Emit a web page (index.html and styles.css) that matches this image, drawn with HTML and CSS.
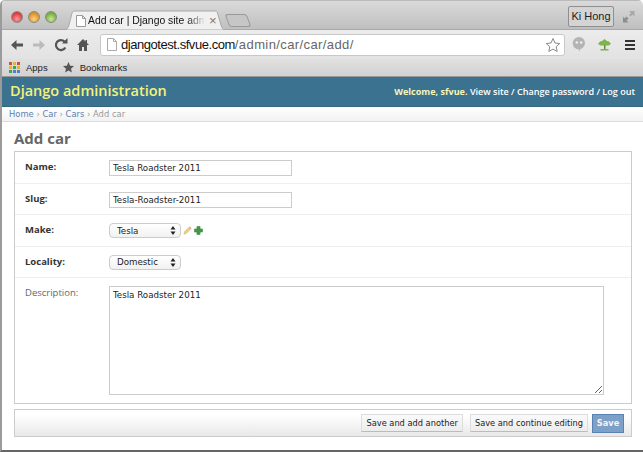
FILE: index.html
```html
<!DOCTYPE html>
<html lang="en">
<head>
<meta charset="utf-8">
<title>Add car | Django site admin</title>
<link rel="stylesheet" href="styles.css">
</head>
<body>
<div class="window">
  <div class="tabbar">
    <div class="lights"><i class="light red"></i><i class="light amber"></i><i class="light green"></i></div>
    <div class="tab">
      <svg class="tab-shape" width="161" height="20" viewBox="0 0 161 20"><path d="M0 20C3 20 4 18 5 15L8 3C8.500 1.500 9.500 1 11 1H151C152.500 1 153 1.500 153.500 3L157 15C158 18 159 20 161 20z" fill="#f0f0f0" stroke="#a8a8a8"/></svg>
      <svg class="page-icon" width="10" height="12" viewBox="0 0 10 12"><path d="M.5.500h6l3 3v8h-9z M6.500.5v3h3" fill="#fff" stroke="#9a9a9a"/></svg>
      <span class="tab-title">Add car | Django site adm</span>
      <span class="tab-close">×</span>
    </div>
    <div class="newtab"></div>
    <div class="spacer"></div>
    <div class="profile">Ki Hong</div>
    <svg class="fullscreen" width="13" height="13" viewBox="0 0 13 13"><path d="M7 1h5.500v5.500l-2-2-2 2-1.500-1.500 2-2z" fill="#a8a8a8"/><path d="M1 6.500v6h5.500l-2-2 2-2-2-2-2 2z" fill="#8d8d8d"/></svg>
  </div>
  <div class="toolbar">
    <svg class="nav" width="14" height="14" viewBox="0 0 14 14"><path d="M13 5.500H6.500V2L1 7l5.500 5V8.500H13z" fill="#555"/></svg>
    <svg class="nav" width="14" height="14" viewBox="0 0 14 14"><path d="M1 5.500h6.500V2L13 7l-5.500 5V8.500H1z" fill="#bbb"/></svg>
    <svg class="nav" width="14" height="14" viewBox="0 0 14 14"><path d="M11.300 9.500A5 5 0 1 1 10.500 3.500" fill="none" stroke="#555" stroke-width="2.200"/><path d="M8 5.500h5.500V0z" fill="#555"/></svg>
    <svg class="nav" width="14" height="14" viewBox="0 0 14 14"><path d="M7 1L1 7h2v6h3V9h2v4h3V7h2l-2-2V2H9.500v1.500z" fill="#555"/></svg>
    <div class="omnibox">
      <svg class="page-icon" width="10" height="13" viewBox="0 0 10 13"><path d="M.5.500h6l3 3v9h-9z M6.500.5v3h3" fill="#fff" stroke="#aaa"/></svg>
      <span class="url"><span class="host">djangotest.sfvue.com</span>/admin/car/car/add/</span>
      <svg class="star" width="16" height="16" viewBox="0 0 16 16"><path d="M8 1.500l2 4.500 4.800.5-3.600 3.200 1 4.800L8 12.100l-4.200 2.400 1-4.800L1.200 6.500 6 6z" fill="#fff" stroke="#8a8a8a"/></svg>
    </div>
    <svg class="ext bubble" width="14" height="17" viewBox="0 0 14 17"><path d="M7 1a6 6 0 0 1 6 6c0 3-2 5-5 6.500V16l-1-2.500A6 6 0 0 1 7 1z" fill="#b4b4b4"/><circle cx="4.800" cy="6.500" r="1.300" fill="#eee"/><circle cx="9.200" cy="6.500" r="1.300" fill="#eee"/></svg>
    <svg class="ext tree" width="15" height="14" viewBox="0 0 15 14"><path d="M7.500 1L10 3l2 .5 2 2.500-2.500 1.500h-8L1 6l2-2.500L5 3z" fill="#7cb64a"/><path d="M7 7h1.500v4H7z" fill="#6a8a3a"/><path d="M3.500 11h8v1.500h-8z" fill="#7cb64a"/></svg>
    <div class="menu"><i></i><i></i><i></i></div>
  </div>
  <div class="bookmarks">
    <span class="apps"><i class="r"></i><i class="y"></i><i class="r"></i><i class="y"></i><i class="g"></i><i class="y"></i><i class="g"></i><i class="b"></i><i class="b"></i></span>
    <span class="bm-label">Apps</span>
    <svg class="bm-star" width="11" height="11" viewBox="0 0 11 11"><path d="M5.500 0l1.600 3.700 3.900.4-3 2.600.9 3.900-3.400-2-3.400 2 .9-3.900-3-2.600 3.900-.4z" fill="#555"/></svg>
    <span class="bm-label">Bookmarks</span>
  </div>

  <header class="site-header">
    <h1 class="branding">Django administration</h1>
    <div class="usertools"><strong class="welcome">Welcome, sfvue.</strong> View site / Change password / Log out</div>
  </header>
  <nav class="breadcrumbs"><a>Home</a> › <a>Car</a> › <a>Cars</a> › Add car</nav>

  <main class="content">
    <h2 class="title">Add car</h2>
    <form class="form">
      <fieldset class="module">
        <div class="row">
          <label class="label required">Name:</label>
          <input class="text" type="text" value="Tesla Roadster 2011">
        </div>
        <div class="row">
          <label class="label required">Slug:</label>
          <input class="text" type="text" value="Tesla-Roadster-2011">
        </div>
        <div class="row sel-row">
          <label class="label required">Make:</label>
          <span class="select"><select><option>Tesla</option></select><svg class="updown" width="6" height="9" viewBox="0 0 6 9"><path d="M3 0l2.500 3.500h-5zM3 9L.5 5.500h5z" fill="#222"/></svg></span>
          <svg class="pencil" width="9" height="9" viewBox="0 0 10 10"><path d="M1 9l.7-2.600 5-5 1.900 1.900-5 5z" fill="#f0d27a" stroke="#c9a24c" stroke-width=".5"/><path d="M6.700 1.400l.9-.9 1.900 1.900-.9.900z" fill="#e58fb0"/></svg>
          <svg class="plus" width="9" height="9" viewBox="0 0 10 10"><path d="M3.200.5h3.600v2.700h2.700v3.600H6.800v2.700H3.200V6.800H.5V3.200h2.700z" fill="#3f9c45" stroke="#2d7a34" stroke-width=".5"/></svg>
        </div>
        <div class="row sel-row">
          <label class="label required">Locality:</label>
          <span class="select"><select><option>Domestic</option></select><svg class="updown" width="6" height="9" viewBox="0 0 6 9"><path d="M3 0l2.500 3.500h-5zM3 9L.5 5.500h5z" fill="#222"/></svg></span>
        </div>
        <div class="row last">
          <label class="label">Description:</label>
          <textarea class="area">Tesla Roadster 2011</textarea>
        </div>
      </fieldset>
      <div class="submit-row">
        <button type="button" class="btn">Save and add another</button>
        <button type="button" class="btn">Save and continue editing</button>
        <button type="button" class="btn default">Save</button>
      </div>
    </form>
  </main>
</div>
</body>
</html>
```
FILE: styles.css
```css
* { box-sizing: border-box; }
html, body { margin: 0; height: 100%; }
body { background: #fff; overflow: hidden; font-family: "DejaVu Sans", sans-serif; }
.window { width: 643px; height: 452px; border-left: 2px solid #9b9b9b; border-bottom: 2px solid #666; border-radius: 5px 5px 0 0; background: #fff; display: flex; flex-direction: column; overflow: hidden; }

.tabbar { height: 30px; flex: none; display: flex; align-items: flex-end; background: linear-gradient(#dadada, #bfbfbf); border-top: 1px solid #bbb; border-bottom: 1px solid #a9a9a9; }
.lights { display: flex; gap: 7px; padding: 0 0 6px 10px; width: 62px; flex: none; }
.light { width: 10px; height: 10px; border-radius: 50%; border: 1px solid #8a8a8a; box-sizing: content-box; margin: 0 -1px; }
.red { background: radial-gradient(circle at 50% 70%, #f79a9a, #d9383c 70%); }
.amber { background: radial-gradient(circle at 50% 70%, #fcd27f, #d98f20 70%); }
.green { background: radial-gradient(circle at 50% 70%, #c8e88f, #74ac3e 70%); }
.tab { position: relative; width: 161px; height: 20px; flex: none; display: flex; align-items: center; padding: 1px 0 0 12px; gap: 2px; font: 11px "Liberation Sans", sans-serif; color: #111; margin-bottom: -1px; }
.tab-shape { position: absolute; left: 0; top: 0; }
.tab .page-icon { position: relative; flex: none; }
.tab-title { position: relative; white-space: nowrap; width: 117px; flex: none; font-size: 10.400px; -webkit-mask-image: linear-gradient(90deg, #000 85%, transparent); mask-image: linear-gradient(90deg, #000 85%, transparent); }
.tab-close { position: relative; color: #777; font-size: 13px; margin-left: 2px; }
.newtab { width: 22px; height: 13px; margin: 0 0 2px 2px; border: 1px solid #999; border-radius: 3px; background: #c6c6c6; transform: skewX(20deg); }
.spacer { flex: 1; }
.profile { height: 21px; width: 46px; margin-bottom: 2px; border: 1px solid #8f8f8f; border-radius: 2px; font: 11px/19px "Liberation Sans", sans-serif; text-align: center; color: #222; background: #d4d4d4; }
.fullscreen { margin: 0 8px 6px 8px; }

.toolbar { height: 29px; flex: none; display: flex; align-items: center; background: linear-gradient(#ececec, #e2e2e2); padding-left: 8px; gap: 8px; }
.nav { flex: none; }
.omnibox { width: 465px; height: 22px; flex: none; margin-left: 2px; background: #fff; border: 1px solid #c8c8c8; border-radius: 3px; display: flex; align-items: center; padding: 0 3px 0 6px; gap: 4px; }
.url { flex: 1; font: 13px "Liberation Sans", sans-serif; letter-spacing: .4px; color: #666; white-space: nowrap; }
.host { color: #111; letter-spacing: -.45px; }
.ext { flex: none; }
.bubble { margin-left: -1px; }
.tree { margin-left: 3px; }
.menu { margin-left: 5px; display: flex; flex-direction: column; gap: 2px; width: 10px; flex: none; }
.menu i { height: 2px; background: #333; display: block; }

.bookmarks { height: 18px; flex: none; display: flex; align-items: center; padding-left: 7px; background: linear-gradient(#e0e0e0, #d2d2d2); font: 9.500px "Liberation Sans", sans-serif; color: #222; border-bottom: 1px solid #999; }
.apps { display: grid; grid-template-columns: repeat(3, 3px); grid-auto-rows: 3px; gap: 1px; width: 11px; margin-right: 6px; }
.apps i { display: block; }
.apps .r { background: #e0483e; } .apps .y { background: #e8b420; } .apps .g { background: #3aa757; } .apps .b { background: #4a80d8; }
.bm-star { margin: 0 6px 0 15px; }

.site-header { height: 30px; flex: none; background: #3b7290; display: flex; align-items: center; justify-content: space-between; padding: 0 8px 2px 8px; border-bottom: 1px solid #34677f; }
.branding { margin: 0; font: 600 14.500px "Open Sans", sans-serif; color: #f4f379; }
.usertools { font: 600 9.050px "Open Sans", sans-serif; color: #fff; padding-top: 2px; }
.welcome { color: #f5f5b8; font-weight: 700; }

.breadcrumbs { height: 15px; flex: none; padding-left: 7px; font: 8.400px/15px "DejaVu Sans", sans-serif; color: #999; background: linear-gradient(#fff, #f2f2f2); border-bottom: 1px solid #ddd; }
.breadcrumbs a { color: #5b80b2; }

.content { flex: 1; padding: 0 11px 0 12px; }
.title { margin: 0; height: 29px; padding-top: 8px; font: 700 15px/17px "Open Sans", sans-serif; color: #666; }
.module { margin: 0; padding: 0; border: 1px solid #ccc; min-width: 0; height: 253px; }
.row { display: flex; align-items: flex-start; height: 31.500px; padding: 8px 0 0 10px; border-bottom: 1px solid #eee; }
.row.last { height: auto; border-bottom: 0; }
.label { width: 84px; flex: none; font: 700 9.500px/13px "Open Sans", sans-serif; color: #333; }
.label:not(.required) { font-weight: 400; color: #666; }
.text { width: 183px; height: 16px; padding: 0 3px; border: 1px solid #ccc; font: 8.700px "DejaVu Sans", sans-serif; color: #222; outline: 0; background: #fff; }
.area { width: 495px; height: 109px; padding: 2px 3px; border: 1px solid #ccc; font: 8.700px/12px "DejaVu Sans", sans-serif; color: #222; margin: 0; outline: 0; }
.select { position: relative; display: inline-flex; }
.select select { appearance: none; -webkit-appearance: none; width: 72px; height: 15px; padding: 0 7px; border: 1px solid #ccc; border-radius: 4px; font: 8.700px "DejaVu Sans", sans-serif; color: #222; background: linear-gradient(#fff, #f1f1f1); outline: 0; }
.updown { position: absolute; right: 5px; top: 3px; }
.pencil { margin: 3px 0 0 2px; }
.plus { margin: 3px 0 0 2px; }

.submit-row { margin-top: 5px; height: 28px; border: 1px solid #ccc; display: flex; justify-content: flex-end; align-items: center; padding-right: 7px; gap: 7px; background: linear-gradient(#fff 20%, #e8e8e8); }
.btn { height: 18px; padding: 0 4px; border: 1px solid #ddd; border-bottom-color: #bbb; background: linear-gradient(#fafafa, #ececec); font: 8.250px "DejaVu Sans", sans-serif; color: #222; white-space: nowrap; }
.btn.default { width: 32px; height: 19px; padding: 0; border: 1px solid #5b80b2; background: #7ca0c7; color: #f4f4f4; font-weight: 700; margin-left: -3px; }
```
